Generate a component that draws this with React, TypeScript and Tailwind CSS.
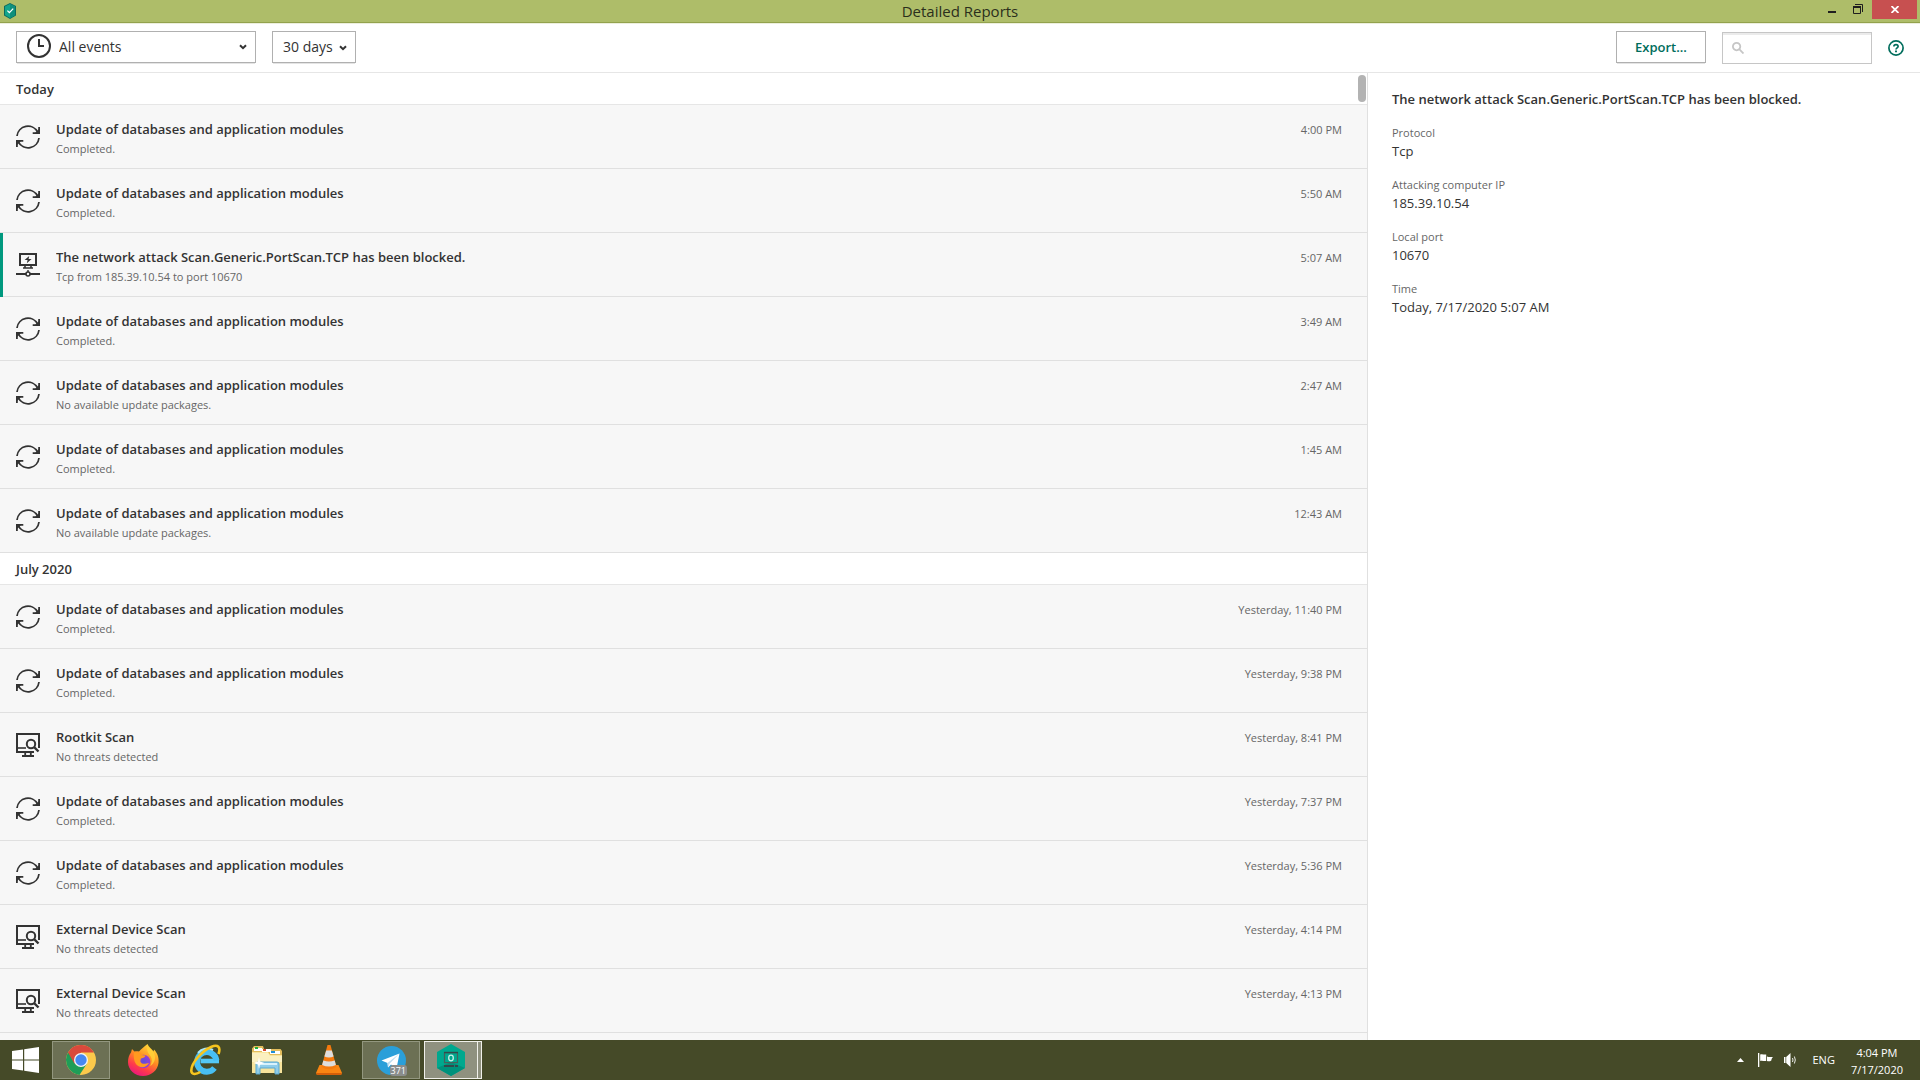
import { useState } from 'react'
import type { ReactNode } from 'react'

type EventKind = 'update' | 'attack' | 'scan'

interface ReportEvent {
  id: number
  kind: EventKind
  title: string
  status: string
  time: string
}

const UPDATE_TITLE = 'Update of databases and application modules'

const GROUPS: { label: string; events: ReportEvent[] }[] = [
  {
    label: 'Today',
    events: [
      { id: 1, kind: 'update', title: UPDATE_TITLE, status: 'Completed.', time: '4:00 PM' },
      { id: 2, kind: 'update', title: UPDATE_TITLE, status: 'Completed.', time: '5:50 AM' },
      {
        id: 3,
        kind: 'attack',
        title: 'The network attack Scan.Generic.PortScan.TCP has been blocked.',
        status: 'Tcp from 185.39.10.54 to port 10670',
        time: '5:07 AM',
      },
      { id: 4, kind: 'update', title: UPDATE_TITLE, status: 'Completed.', time: '3:49 AM' },
      { id: 5, kind: 'update', title: UPDATE_TITLE, status: 'No available update packages.', time: '2:47 AM' },
      { id: 6, kind: 'update', title: UPDATE_TITLE, status: 'Completed.', time: '1:45 AM' },
      { id: 7, kind: 'update', title: UPDATE_TITLE, status: 'No available update packages.', time: '12:43 AM' },
    ],
  },
  {
    label: 'July 2020',
    events: [
      { id: 8, kind: 'update', title: UPDATE_TITLE, status: 'Completed.', time: 'Yesterday, 11:40 PM' },
      { id: 9, kind: 'update', title: UPDATE_TITLE, status: 'Completed.', time: 'Yesterday, 9:38 PM' },
      { id: 10, kind: 'scan', title: 'Rootkit Scan', status: 'No threats detected', time: 'Yesterday, 8:41 PM' },
      { id: 11, kind: 'update', title: UPDATE_TITLE, status: 'Completed.', time: 'Yesterday, 7:37 PM' },
      { id: 12, kind: 'update', title: UPDATE_TITLE, status: 'Completed.', time: 'Yesterday, 5:36 PM' },
      { id: 13, kind: 'scan', title: 'External Device Scan', status: 'No threats detected', time: 'Yesterday, 4:14 PM' },
      { id: 14, kind: 'scan', title: 'External Device Scan', status: 'No threats detected', time: 'Yesterday, 4:13 PM' },
    ],
  },
]

const DETAILS = [
  { label: 'Protocol', value: 'Tcp' },
  { label: 'Attacking computer IP', value: '185.39.10.54' },
  { label: 'Local port', value: '10670' },
  { label: 'Time', value: 'Today, 7/17/2020 5:07 AM' },
]

function UpdateIcon() {
  return (
    <svg className="size-6" viewBox="0 0 24 24" fill="none" stroke="#333" strokeWidth={1.8}>
      <path d="M1 11A11 11 0 0 1 21.6 7" />
      <path d="M23 13A11 11 0 0 1 2.4 17" />
      <path d="M23.1 2v6.2h-6.4" />
      <path d="M.9 22v-6.2h6.4" />
      <path d="M23.5 3.5v5h-5zM.5 20.5v-5h5z" fill="#333" stroke="none" />
    </svg>
  )
}

function AttackIcon() {
  return (
    <svg className="size-6" viewBox="0 0 24 24" fill="none" stroke="#333" strokeWidth={2}>
      <path d="M4 1h16v11H4z" />
      <path d="M13.2 3 8.6 7h3l-.8 3.2 4.8-4.2h-3z" fill="#333" stroke="none" />
      <path d="M9 12.5v2M15 12.5v2M7 15h10" strokeWidth={1.6} />
      <path d="M0 21h10M14 21h10" />
      <circle cx="12" cy="21" r="2" strokeWidth={1.6} />
      <path d="M12 17v2" strokeWidth={1.4} />
    </svg>
  )
}

function ScanIcon() {
  return (
    <svg className="size-6" viewBox="0 0 24 24" fill="none" stroke="#333" strokeWidth={2}>
      <path d="M23 15V1H1v18h17" />
      <path d="M1 15h9" strokeWidth={1.6} />
      <circle cx="15" cy="11" r="4.2" />
      <path d="m18 14 4.5 4.5" strokeWidth={2.4} />
      <path d="M9.2 19v4M14.8 19v4M6 23h12" strokeWidth={1.8} />
    </svg>
  )
}

const EVENT_ICONS: Record<EventKind, ReactNode> = {
  update: <UpdateIcon />,
  attack: <AttackIcon />,
  scan: <ScanIcon />,
}

function Chevron({ className }: { className: string }) {
  return (
    <svg className={className} viewBox="0 0 8 6" fill="none" stroke="#333" strokeWidth={2}>
      <path d="M1 1.2 4 4.2 7 1.2" />
    </svg>
  )
}

function TitleBar() {
  return (
    <header className="grid h-6 shrink-0 grid-cols-[1fr_auto_1fr] items-start border-b border-[#ecefdd] bg-[#aebd69] shadow-[inset_0_-1px_0_#93a24d]">
      <svg className="mt-[3px] ml-1 h-4 w-3" viewBox="0 0 12 16">
        <path d="M6 0 12 3v9.5L6 16 0 12.500V3z" fill="#0c6b5f" />
        <path d="M6 1 11 3.600v8.300L6 15 1 11.900V3.600z" fill="#12a58c" />
        <path d="M6 1 11 3.600v8.300L6 15z" fill="#0f8f7c" />
        <path d="m3.400 7.600 2 2 3.800-4" fill="none" stroke="#fff" strokeWidth={1.300} />
      </svg>
      <h1 className="text-[15px] leading-[23px] text-[#2b2f1c]">Detailed Reports</h1>
      <div className="flex justify-self-end pr-[3px]">
        <button aria-label="Minimize" className="h-[19px] w-6">
          <svg className="mx-auto h-[19px] w-2" viewBox="0 0 8 19">
            <path d="M0 11h8v2H0z" fill="#1f1f1f" />
          </svg>
        </button>
        <button aria-label="Restore" className="h-[19px] w-7">
          <svg className="ml-[9px] h-[19px] w-[10px]" viewBox="0 0 10 19" fill="none" stroke="#1f1f1f">
            <path d="M2 4.500h7.500V12" />
            <path d="M.5 7h7v6.500h-7z" />
            <path d="M0 7h8" strokeWidth={2} />
          </svg>
        </button>
        <button aria-label="Close" className="flex h-[19px] w-[45px] items-center justify-center bg-[#c75050]">
          <svg className="h-[7px] w-2" viewBox="0 0 8 7" stroke="#fff" strokeWidth={1.800}>
            <path d="m.5 0 7 7M7.500 0l-7 7" />
          </svg>
        </button>
      </div>
    </header>
  )
}

function Toolbar() {
  const [query, setQuery] = useState('')

  return (
    <div className="flex h-[49px] shrink-0 items-start border-b border-[#e6e6e6] pt-[7px] pr-2 pl-4">
      <div className="relative">
        <select
          aria-label="Event type"
          className="h-8 w-60 appearance-none border border-[#b0b0b0] bg-white pb-px pl-[42px] text-sm text-[#333] shadow-[0_2px_0_-1px_#e4e4e4]"
        >
          <option>All events</option>
        </select>
        <svg
          className="pointer-events-none absolute top-[3px] left-[11px] size-6"
          viewBox="0 0 24 24"
          fill="none"
          stroke="#333"
          strokeWidth={2}
        >
          <circle cx="12" cy="12" r="11" />
          <path d="M12 5v7h5" />
        </svg>
        <Chevron className="pointer-events-none absolute top-[13px] right-[9px] h-[6px] w-2" />
      </div>
      <div className="relative ml-4">
        <select
          aria-label="Period"
          className="h-8 w-[84px] appearance-none border border-[#b0b0b0] bg-white pl-[10px] text-sm text-[#333] shadow-[0_2px_0_-1px_#e4e4e4]"
        >
          <option>30 days</option>
        </select>
        <Chevron className="pointer-events-none absolute top-[14px] right-[9px] h-[6px] w-2" />
      </div>

      <button className="ml-auto h-8 w-[90px] border border-[#b0b0b0] bg-white pt-px text-[13px] font-semibold text-[#006d5c] shadow-[0_2px_0_-1px_#e4e4e4]">
        Export...
      </button>
      <div className="relative mt-px ml-4">
        <input
          type="search"
          aria-label="Search"
          value={query}
          onChange={(e) => setQuery(e.target.value)}
          className="h-8 w-[150px] border border-[#c6c6c6] pr-2 pl-7 text-sm text-[#333] shadow-[inset_0_2px_0_#ebebeb] outline-none"
        />
        <svg
          className="pointer-events-none absolute top-[10px] left-[10px] size-3"
          viewBox="0 0 12 12"
          fill="none"
          stroke="#c6c6c6"
          strokeWidth={1.800}
        >
          <circle cx="4.600" cy="4.600" r="3.700" />
          <path d="m7.200 7.200 4.300 4.300" />
        </svg>
      </div>
      <button aria-label="Help" className="mt-[9px] mr-2 ml-4 size-4">
        <svg className="size-4" viewBox="0 0 16 16" fill="none" stroke="#006d5c" strokeWidth={1.700}>
          <circle cx="8" cy="8" r="7.100" />
          <path d="M5.900 6.500C5.900 4 10.100 4 10.100 6.400 10.100 7.900 8 7.800 8 9.600" />
          <path d="M8 10.600v1.700" strokeWidth={1.900} />
        </svg>
      </button>
    </div>
  )
}

interface EventRowProps {
  event: ReportEvent
  selected: boolean
  onSelect: () => void
}

function EventRow({ event, selected, onSelect }: EventRowProps) {
  return (
    <li className="relative">
      {selected && <span className="absolute inset-y-0 left-0 w-[3px] bg-[#00997f]" />}
      <button
        onClick={onSelect}
        className="flex h-16 w-full items-start border-b border-[#e0e0e0] bg-[#f7f7f7] pr-[25px] pl-4 text-left"
      >
        <span className="mt-5 mr-4 size-6 shrink-0">{EVENT_ICONS[event.kind]}</span>
        <span className="mt-[14px] min-w-0 flex-1">
          <span className="block truncate text-[13px] leading-5 font-semibold text-[#333]">{event.title}</span>
          <span className="block truncate text-[11px] leading-5 text-[#666]">{event.status}</span>
        </span>
        <span className="mt-[14px] text-[11px] leading-[21px] text-[#666]">{event.time}</span>
      </button>
    </li>
  )
}

function EventList() {
  const [selectedId, setSelectedId] = useState(3)

  return (
    <main className="relative min-w-0 flex-1 overflow-hidden border-r border-[#e0e0e0] bg-[#f7f7f7]">
      {GROUPS.map((group) => (
        <section key={group.label}>
          <h2 className="h-8 border-b border-[#e6e6e6] bg-white pl-4 text-[13px] leading-8 font-semibold text-[#333]">
            {group.label}
          </h2>
          <ul>
            {group.events.map((event) => (
              <EventRow
                key={event.id}
                event={event}
                selected={event.id === selectedId}
                onSelect={() => setSelectedId(event.id)}
              />
            ))}
          </ul>
        </section>
      ))}
      {/* Scroll thumb */}
      <span className="absolute top-[2px] right-px h-[27px] w-2 rounded-full bg-[#b3b3b3]" />
    </main>
  )
}

function DetailsPane() {
  return (
    <aside className="w-[552px] shrink-0 bg-white px-6 pt-4">
      <h2 className="text-[13px] leading-5 font-semibold text-[#333]">
        The network attack Scan.Generic.PortScan.TCP has been blocked.
      </h2>
      <dl className="mt-[15px] space-y-4">
        {DETAILS.map((d) => (
          <div key={d.label}>
            <dt className="text-[11px] leading-[18px] text-[#666]">{d.label}</dt>
            <dd className="text-[13px] leading-[18px] text-[#333]">{d.value}</dd>
          </div>
        ))}
      </dl>
    </aside>
  )
}

function WindowsLogo() {
  return (
    <svg className="h-[26px] w-[27px]" viewBox="0 0 27 26" fill="#fff">
      <path d="M0 4 11 2.400v10H0zM12.200 2.200 27 0v12.400H12.200zM0 13.600h11v10L0 22zM12.200 13.600H27V26l-14.800-2.200z" />
    </svg>
  )
}

function ChromeIcon() {
  return (
    <svg className="size-[30px]" viewBox="0 0 30 30">
      <circle cx="15" cy="15" r="15" fill="#fbc94b" />
      <path d="M15 15 2 7.500A15 15 0 0 0 13.500 29.900L21 18.500z" fill="#1f9d58" />
      <path d="M2 7.500A15 15 0 0 1 28 7.500H15L8.500 18.700z" fill="#d9493c" />
      <circle cx="15" cy="15" r="7" fill="#f4f4f4" />
      <circle cx="15" cy="15" r="5.700" fill="#4688f1" />
    </svg>
  )
}

function FirefoxIcon() {
  return (
    <svg className="size-8" viewBox="0 0 32 32">
      <defs>
        <linearGradient id="fx-body" x1="0.800" y1="0" x2="0.300" y2="1">
          <stop offset="0" stopColor="#ffe43b" />
          <stop offset="0.450" stopColor="#ff8c22" />
          <stop offset="0.750" stopColor="#ff3b4a" />
          <stop offset="1" stopColor="#e8177f" />
        </linearGradient>
        <radialGradient id="fx-globe">
          <stop offset="0" stopColor="#5b50d8" />
          <stop offset="1" stopColor="#9a3bd6" />
        </radialGradient>
      </defs>
      <path
        d="M20.500 0c1 3 4 4.500 6 7.500l.5-2c4 4 5 9 4.500 13.500C30.500 26.500 24 32 16 32S1 26 1 18c0-4 1-7 3-9.500L5 5l2.500 2.500c1.500-.5 3-.5 4.500 0C14 5 17 3 20.500 0z"
        fill="url(#fx-body)"
      />
      <circle cx="16.500" cy="17.500" r="6.800" fill="url(#fx-globe)" />
      <path
        d="M7 8.500c3-1 5.500.5 7.500 2.500l4 .5c-.5 2-2 2.500-4.500 3-1 2-1 4 1 5 2.500 1 4.500-.5 7-.5-2 3.500-6 5.500-10 3.500S6 15 7 8.500z"
        fill="#ff9a1f"
      />
      <path d="M20.500 2c-1 5 .5 7 3 10 2 3 1.500 7-.5 10 5-2.500 6.500-9 3.500-14-2-3-4.500-3.500-6-6z" fill="#ffd43a" opacity=".8" />
    </svg>
  )
}

function ExplorerEIcon() {
  return (
    <svg className="h-8 w-[31px]" viewBox="0 0 31 32" fill="none">
      <path d="M29 17H10.500" stroke="#54c8f5" strokeWidth={4.600} />
      <path d="M26.500 16.500a9.800 9.800 0 1 0-2 7.500" stroke="#48bff2" strokeWidth={5.800} />
      <path d="M8 9a12 12 0 0 1 15-3" stroke="#a7e7fc" strokeWidth={2} />
      <path
        d="M28.500 10C31 3 28 0 21 3 12 7 1 19 1.300 27c.3 4 5 3.500 9 1"
        stroke="#f6c51e"
        strokeWidth={2.600}
      />
    </svg>
  )
}

function FolderIcon() {
  return (
    <svg className="h-[30px] w-8" viewBox="0 0 32 30">
      <path d="M1 3.500 3 1h9l1 3h16.500l1.500 2v21H1z" fill="#e3bd5d" />
      <path d="M3 3h8v3H3z" fill="#fff" />
      <path d="M4 2h3v2H4z" fill="#1fae3d" />
      <path d="M11 4h9v3h-9z" fill="#fff" />
      <path d="M12 4h3v2h-3z" fill="#d94a2b" />
      <path d="M19 6h10v3H19z" fill="#fff" />
      <path d="M20 6h4v2h-4z" fill="#1f8fd6" />
      <path d="M1 7h16l2 3h12v18H1z" fill="#f8e49c" />
      <path d="M1 8h16l2 3h12v6H1z" fill="#fbf0c0" />
      <path d="M5 29V19q0-2 2-2h19q2 0 2 2v10h-4v-6H9v6z" fill="#8fcdea" stroke="#5ba8cf" />
      <path d="M7 19h19" stroke="#d8f2fc" strokeWidth={2} />
      <path d="m8 12 1 4.500 4.500 1.500L9 19.500 8 24l-1-4.500L2.500 18 7 16.500z" fill="#fff" />
    </svg>
  )
}

function ConeIcon() {
  return (
    <svg className="h-[30px] w-[26px]" viewBox="0 0 26 30">
      <path d="M3.500 20h19L26 28l-1 2H1l-1-2z" fill="#f98512" />
      <path d="M0 28h26l-1 2H1z" fill="#d55f08" />
      <path d="M11.500 0h3l6 22q-7.500 4.500-15 0z" fill="#f47a0e" />
      <path d="m10.200 5.500 5.600 0 1.800 6q-4.600 2-9.200 0z" fill="#ddd" />
      <path d="m7.300 15.500q5.700 2.200 11.400 0l1.200 4.500q-7 3-13.800 0z" fill="#ddd" />
    </svg>
  )
}

function TelegramIcon() {
  return (
    <svg className="size-[29px]" viewBox="0 0 29 29">
      <circle cx="14.500" cy="14.500" r="14.500" fill="#2a9fd9" />
      <path d="M4.500 14.500 22.500 7.500l-3 15-5.500-4-3 3-.5-4.500z" fill="#fff" />
      <path d="m10.500 17 .5 4.500 1.500-3.700L22.500 7.500z" fill="#bcdcef" />
    </svg>
  )
}

function ProtectionIcon() {
  return (
    <svg className="h-8 w-7" viewBox="0 0 28 32" fill="none">
      <path d="M14 0 28 8v16l-14 8L0 24V8z" fill="#00a88e" />
      <path d="M0 24 14 18l14 6-14 8z" fill="#00917b" />
      <path d="M7.500 8.700h13v10h-13z" stroke="#46605c" strokeWidth={1.2} />
      <path d="M7 8.500h14" stroke="#34484a" strokeWidth={1.400} />
      <path d="M7 22h10M18 22h3" stroke="#34484a" strokeWidth={2} />
      <ellipse cx="14" cy="14" rx="2.300" ry="2.800" stroke="#c9f0e9" strokeWidth={1.300} />
    </svg>
  )
}

const APP_SLOT = 'flex h-[38px] w-[58px] items-center justify-center'

function Taskbar() {
  return (
    <footer className="flex h-10 shrink-0 items-center bg-[#454a28] pr-[17px] text-white">
      <button aria-label="Start" className="flex h-10 w-[52px] items-center pl-3">
        <WindowsLogo />
      </button>
      <nav aria-label="Running apps" className="flex gap-1">
        <button aria-label="Chrome" className={`${APP_SLOT} border border-[#93977f] bg-[#6c7054]`}>
          <ChromeIcon />
        </button>
        <button aria-label="Firefox" className={APP_SLOT}>
          <FirefoxIcon />
        </button>
        <button aria-label="Internet Explorer" className={APP_SLOT}>
          <ExplorerEIcon />
        </button>
        <button aria-label="File Explorer" className={APP_SLOT}>
          <FolderIcon />
        </button>
        <button aria-label="VLC" className={APP_SLOT}>
          <ConeIcon />
        </button>
        <button aria-label="Telegram" className={`${APP_SLOT} relative border border-[#93977f] bg-[#6c7054]`}>
          <TelegramIcon />
          <span className="absolute right-3 bottom-[2px] rounded-[3px] bg-[#8a8d8c] px-px text-[9px] leading-[11px]">
            371
          </span>
        </button>
        <button aria-label="Security" className="flex h-[38px] w-[58px]">
          <span className="flex h-full flex-1 items-center justify-center border border-[#f0f0ea] bg-[#8f917f]">
            <ProtectionIcon />
          </span>
          <span className="h-full w-1 border-y border-r border-[#f0f0ea] bg-[#8f917f]" />
        </button>
      </nav>

      {/* System tray */}
      <div className="ml-auto flex items-center">
        <button aria-label="Show hidden icons" className="mr-[14px]">
          <svg className="h-1 w-[7px]" viewBox="0 0 7 4" fill="#fff">
            <path d="M3.500 0 7 4H0z" />
          </svg>
        </button>
        <button aria-label="Action Center" className="mr-[11px]">
          <svg className="h-[14px] w-[15px]" viewBox="0 0 15 14" fill="#fff">
            <path d="M0 0h1.300v14H0z" />
            <path d="M2.200 1.500c2-1 4 .5 6 0V8c-2 .5-4-.8-6 0z" />
            <path d="M9 3.500c2 .8 4 .3 6 .5-1 1-1.500 2-1.700 3.500C12 8.500 10 8.500 9 8z" />
          </svg>
        </button>
        <button aria-label="Volume" className="mr-4">
          <svg className="h-[14px] w-3" viewBox="0 0 12 14" fill="#fff">
            <path d="M0 4h1.500v6H0zM2.200 4 6.500 0v14L2.200 10z" />
            <path d="M8.500 5q1 2 0 4M10.400 3.500q1.800 3.500 0 7" fill="none" stroke="#fff" strokeWidth={0.900} />
          </svg>
        </button>
        <button className="mr-4 text-[11px]">ENG</button>
        <button className="pt-[2px] text-center text-[11px] leading-[17px]">
          <span className="block">4:04 PM</span>
          <span className="block">7/17/2020</span>
        </button>
      </div>
    </footer>
  )
}

export default function App() {
  return (
    <div className="flex h-screen flex-col overflow-hidden bg-white font-['Open_Sans','Noto_Sans',sans-serif]">
      <TitleBar />
      <Toolbar />
      <div className="flex min-h-0 flex-1">
        <EventList />
        <DetailsPane />
      </div>
      <Taskbar />
    </div>
  )
}
